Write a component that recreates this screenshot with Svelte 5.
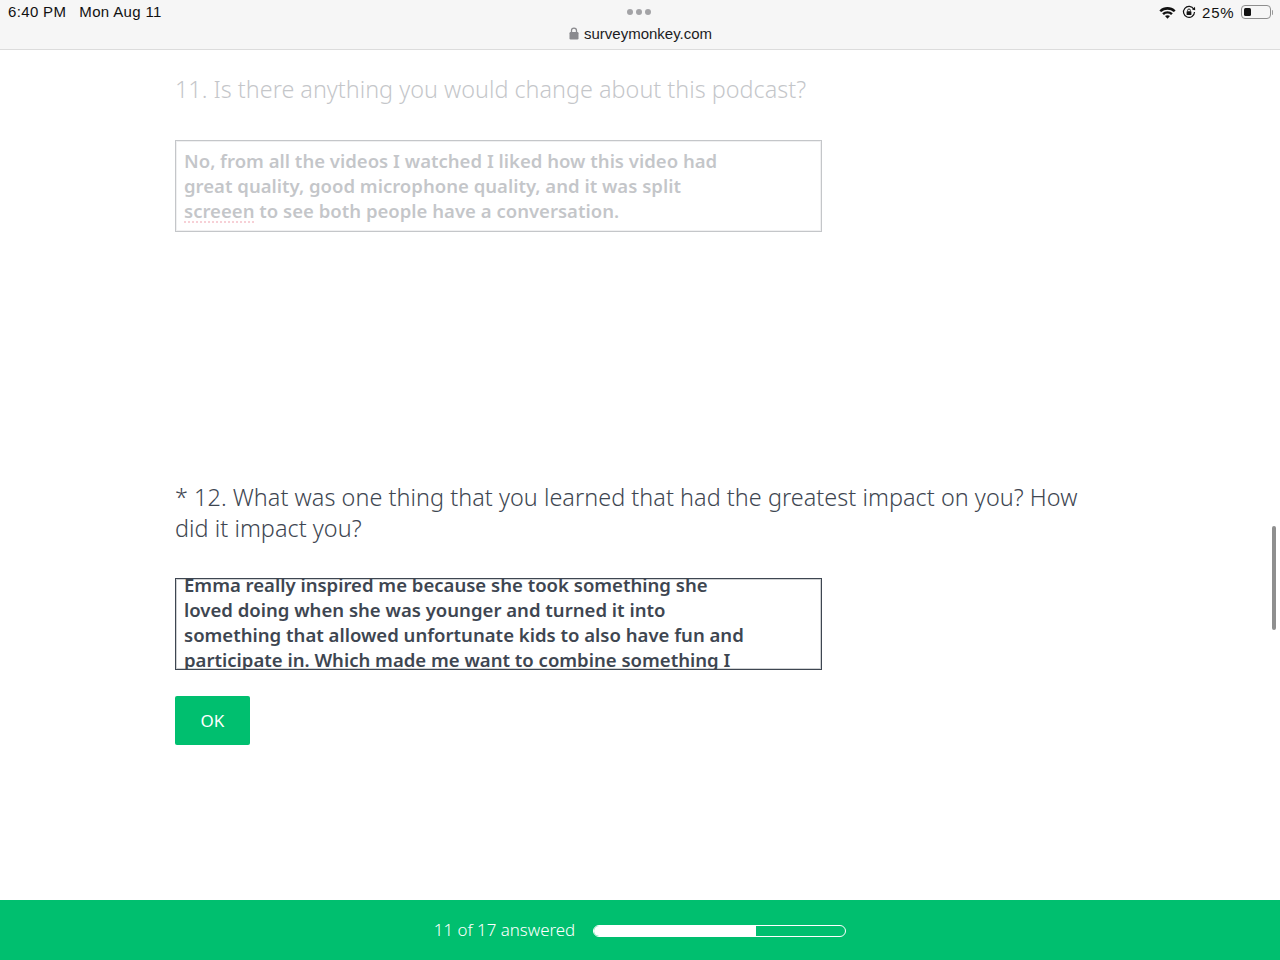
<script>
    // Survey state shown on the page
    const answered = 11;
    const total = 17;
    const progress = 64.5;
</script>

<div class="page">
    <header class="browser-bar">
        <div class="status-row">
            <div class="clock"><span class="time">6:40 PM</span><span>Mon Aug 11</span></div>
            <div class="dots"><i></i><i></i><i></i></div>
            <div class="status-icons">
                <svg width="17" height="13" viewBox="0 0 17 13" aria-hidden="true">
                    <path d="M0.4 4.4C5 0 12 0 16.6 4.4L14.9 6.1C11.3 2.8 5.7 2.8 2.1 6.1Z" fill="#111"/>
                    <path d="M3.2 7.2C6.2 4.5 10.8 4.5 13.8 7.2L12.1 8.9C10 7.1 7 7.1 4.9 8.9Z" fill="#111"/>
                    <path d="M6 10C7.4 8.9 9.6 8.9 11 10L8.5 12.8Z" fill="#111"/>
                </svg>
                <svg class="rotation" width="14" height="14" viewBox="0 0 14 14" aria-hidden="true">
                    <path d="M11.8 4.2A5.5 5.5 0 1 0 12.5 7" fill="none" stroke="#111" stroke-width="1.2"/>
                    <path d="M10 4.6L13.2 5.2L13 1.8Z" fill="#111"/>
                    <rect x="4.6" y="6.2" width="4.8" height="3.8" rx="0.6" fill="#111"/>
                    <path d="M5.6 6.4V5.4A1.4 1.4 0 0 1 8.4 5.4V6.4" fill="none" stroke="#111" stroke-width="0.9"/>
                </svg>
                <span class="battery-text">25%</span>
                <div class="battery"><div class="battery-level"></div></div>
                <div class="battery-cap"></div>
            </div>
        </div>
        <div class="address">
            <svg width="10" height="13" viewBox="0 0 10 13" aria-hidden="true">
                <rect x="0.5" y="5" width="9" height="7.5" rx="1.2" fill="#8a8a8e"/>
                <path d="M2.5 5.5V3.6A2.5 2.5 0 0 1 7.5 3.6V5.5" fill="none" stroke="#8a8a8e" stroke-width="1.3"/>
            </svg>
            <span>surveymonkey.com</span>
        </div>
    </header>

    <main class="survey">
        <section class="question answered">
            <h2>11. Is there anything you would change about this podcast?</h2>
            <div class="answer-box">
                <p>No, from all the videos I watched I liked how this video had<br>great quality, good microphone quality, and it was split<br><span class="misspelled">screeen</span> to see both people have a conversation.</p>
            </div>
        </section>

        <section class="question current">
            <h2>* 12. What was one thing that you learned that had the greatest impact on you? How did it impact you?</h2>
            <div class="answer-box">
                <p>Emma really inspired me because she took something she<br>loved doing when she was younger and turned it into<br>something that allowed unfortunate kids to also have fun and<br>participate in. Which made me want to combine something I</p>
            </div>
            <button class="ok">OK</button>
        </section>
    </main>

    <footer class="progress-bar">
        <span class="progress-label">{answered} of {total} answered</span>
        <div class="track"><div class="fill" style="width: {progress}%"></div></div>
    </footer>

    <div class="scroll-thumb"></div>
</div>

<style>
    :global(body) {
        margin: 0;
    }

    .page {
        position: relative;
        width: 1280px;
        height: 960px;
        overflow: hidden;
        display: flex;
        flex-direction: column;
        background: #ffffff;
        font-family: "Noto Sans", sans-serif;
    }

    .browser-bar {
        height: 50px;
        box-sizing: border-box;
        background: #f6f6f6;
        border-bottom: 1px solid #dcdcdc;
        font-family: "Liberation Sans", sans-serif;
        color: #111111;
        flex: none;
    }

    .status-row {
        position: relative;
        height: 24px;
        display: flex;
        justify-content: space-between;
        align-items: center;
        padding: 0 7px 0 8px;
    }

    .clock {
        display: flex;
        gap: 13px;
        font-size: 15px;
        letter-spacing: 0.35px;
        margin-top: -1px;
    }

    .dots {
        position: absolute;
        left: 627px;
        top: 9px;
        display: flex;
        gap: 3px;
    }

    .dots i {
        width: 6px;
        height: 6px;
        border-radius: 50%;
        background: #a3a3a6;
    }

    .status-icons {
        display: flex;
        align-items: center;
        font-size: 15px;
    }

    .rotation {
        margin-left: 6px;
    }

    .battery-text {
        margin-left: 6px;
        letter-spacing: 0.8px;
    }

    .battery {
        width: 30px;
        height: 14px;
        box-sizing: border-box;
        margin-left: 6px;
        padding: 2px;
        border: 1px solid #8e8e8e;
        border-radius: 4px;
    }

    .battery-level {
        width: 7px;
        height: 100%;
        border-radius: 1.5px;
        background: #111111;
    }

    .battery-cap {
        width: 1.5px;
        height: 5px;
        margin-left: 1px;
        border-radius: 0 1px 1px 0;
        background: #9a9a9a;
    }

    .address {
        display: flex;
        justify-content: center;
        align-items: center;
        gap: 5px;
        height: 18px;
        padding-left: 1px;
        font-size: 15px;
        color: #1c1c1e;
    }

    .survey {
        flex: 1;
        padding-left: 175px;
    }

    .question h2 {
        margin: 0;
        width: 920px;
        font-size: 23.4px;
        line-height: 31px;
        font-weight: 300;
        color: #3e4651;
    }

    .answered {
        height: 407px;
        padding-top: 24px;
        box-sizing: border-box;
        opacity: 0.3;
    }

    .answer-box {
        width: 647px;
        height: 92px;
        margin-top: 35px;
        box-sizing: border-box;
        border: 1px solid #3e4651;
        box-shadow: inset 0 0 0 1px rgba(62, 70, 81, 0.25);
        overflow: hidden;
        padding: 7px 8px 0;
    }

    .answer-box p {
        margin: 0;
        font-size: 18.55px;
        line-height: 25px;
        font-weight: 600;
        color: #3e4651;
        white-space: nowrap;
    }

    .misspelled {
        text-decoration: underline dotted #e8687a;
        text-underline-offset: 4px;
    }

    .current {
        padding-top: 25px;
    }

    .current h2 {
        letter-spacing: 0.05px;
    }

    .current .answer-box {
        margin-top: 34px;
        padding-top: 0;
    }

    .current .answer-box p {
        margin-top: -7px;
    }

    .ok {
        display: block;
        width: 75px;
        height: 49px;
        margin-top: 26px;
        border: none;
        border-radius: 2px;
        background: #00bf6f;
        color: #ffffff;
        font-family: inherit;
        font-size: 17px;
    }

    .progress-bar {
        flex: none;
        height: 60px;
        display: flex;
        justify-content: center;
        align-items: center;
        gap: 18px;
        background: #00bf6f;
        color: #ffffff;
        font-size: 16.9px;
        font-weight: 300;
    }

    .progress-label {
        margin-bottom: 2px;
    }

    .track {
        width: 253px;
        height: 12px;
        margin-top: 2px;
        box-sizing: border-box;
        border: 1px solid #ffffff;
        border-radius: 6px;
        overflow: hidden;
    }

    .fill {
        height: 100%;
        background: #ffffff;
    }

    .scroll-thumb {
        position: absolute;
        right: 4px;
        top: 526px;
        width: 4px;
        height: 104px;
        border-radius: 2px;
        background: #8f8f8f;
    }
</style>
